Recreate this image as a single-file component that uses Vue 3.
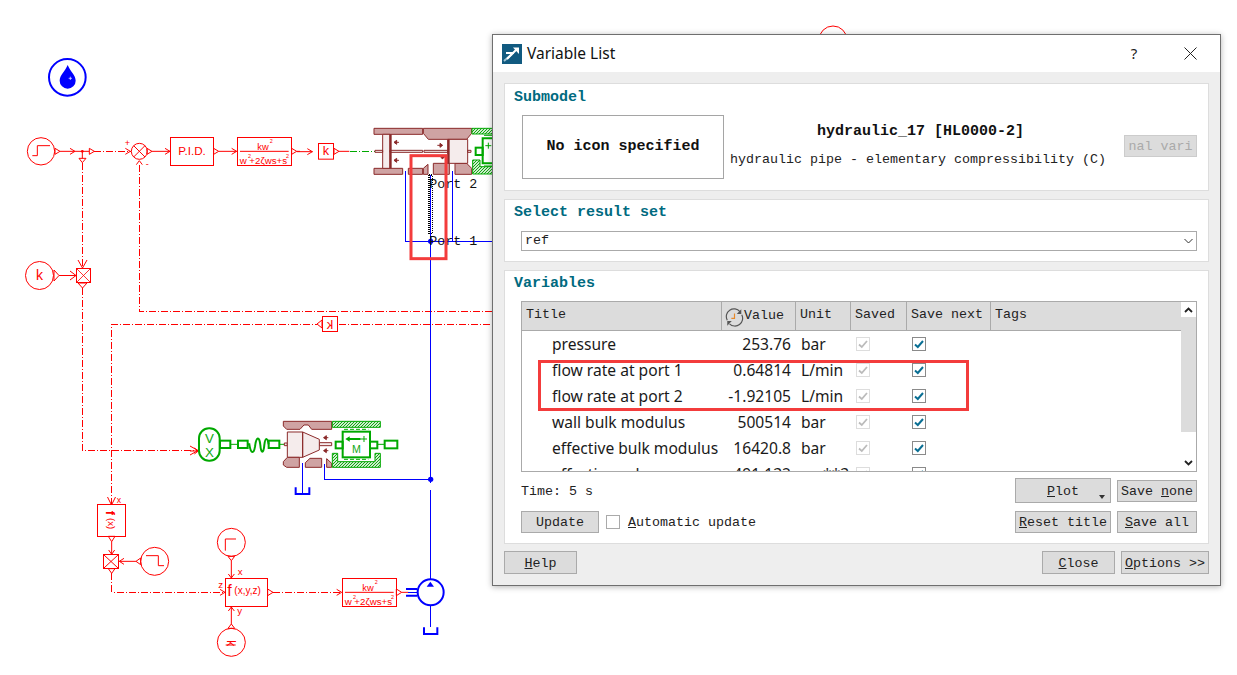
<script setup>
const rows = [
  { title: 'pressure', value: '253.76', unit: 'bar' },
  { title: 'flow rate at port 1', value: '0.64814', unit: 'L/min' },
  { title: 'flow rate at port 2', value: '-1.92105', unit: 'L/min' },
  { title: 'wall bulk modulus', value: '500514', unit: 'bar' },
  { title: 'effective bulk modulus', value: '16420.8', unit: 'bar' },
  { title: 'effective volume', value: '491.132', unit: 'cm**3' }
]
const arrowsLeft = ['M297 127h-14M290 121l-8 6l8 6z', 'M297 181h-14M290 175l-8 6l8 6z']
</script>

<template>
  <div class="desk">
    <svg class="canvas" width="1237" height="675" viewBox="0 0 1237 675">
      <defs>
        <pattern id="hatch" patternUnits="userSpaceOnUse" width="9" height="9">
          <rect width="9" height="9" fill="#cfeccf" />
          <path d="M-2 11L11 -2M-2 2L2 -2M7 11L11 7" stroke="#12a812" stroke-width="3" />
        </pattern>
        <g id="tf">
          <rect class="r3" x="0.5" y="0.5" width="162" height="84" />
          <text class="rt" x="60" y="39" font-size="28">kw</text>
          <text class="rt" x="97" y="18" font-size="16">2</text>
          <path class="r3" d="M8 42H154" />
          <text class="rt" x="7" y="79" font-size="27" textLength="142" lengthAdjust="spacingAndGlyphs">w +2ζws+s</text>
          <text class="rt" x="32" y="62" font-size="16">2</text>
          <text class="rt" x="146" y="62" font-size="16">2</text>
        </g>
      </defs>

      <!-- dash-dot signal routing, in page pixels -->
      <circle class="r1" cx="833" cy="40" r="14" />
      <path class="r1 dash" d="M82.500 163V268M139.500 165V311.500H493M111.500 505V324.500H317M339 324.500H493M82.500 288V450.500H198" />
      <path class="r1" d="M78 260l4.500 8l4.500 -8M190 446l8 4.500l-8 4.500M107.500 497l4 8l4 -8" />

      <!-- k gain into multiplier -->
      <circle class="r1" cx="39.500" cy="275.500" r="14" />
      <text class="rt" x="39.500" y="280" font-size="14" text-anchor="middle">k</text>
      <path class="r1" d="M54 270l5 5.500l-5 5.500zM59 275.500H76M70 271l6 4.500l-6 4.500" />
      <rect class="r1" x="76.500" y="268.500" width="14" height="14" />
      <path class="r1 thin" d="M77 269l13 13M90 269l-13 13" />
      <path class="r1" d="M78 283h9l-4.500 5z" />

      <!-- flipped gain -->
      <rect class="r1" x="322.500" y="316.500" width="15" height="15" />
      <text class="rt" transform="translate(330 329) scale(-1 1)" font-size="13" text-anchor="middle">k</text>
      <path class="r1" d="M322 320l-5 4l5 4z" />

      <!-- top control row: coordinates are 3x crop units -->
      <g transform="translate(0 20) scale(.33333)">
        <circle class="b6" cx="202" cy="172" r="55" />
        <path fill="#00f" d="M203 135C195 155 179 165 179 182A24 24 0 0 0 227 182C227 165 211 155 203 135Z" />
        <path stroke="#fff" stroke-width="2" d="M206 175h10M211 170v10" />
        <circle class="r3" cx="123" cy="394" r="41" />
        <path class="r3" d="M97 407h15V377h38" />
        <path class="r3" d="M165 385l15 9l-15 9zM180 394H268M210 385l15 9l-15 9" />
        <circle class="rd" cx="247" cy="394" r="4" />
        <path class="r3" d="M268 385l15 9l-15 9zM237 415h21l-11 13zM247 394v21" />
        <path class="r3 dash3" d="M283 394H392" />
        <path class="r3" d="M376 385l15 9l-15 9" />
        <circle class="r3" cx="418" cy="394" r="24" />
        <path class="r3" d="M401 377l34 34M435 377l-34 34M409 434l9 -12l9 12" />
        <path class="r3" d="M441 385l15 9l-15 9zM456 394H510M495 385l15 9l-15 9" />
        <text class="rt" x="374" y="378" font-size="27">+</text>
        <text class="rt" x="437" y="441" font-size="27">-</text>
        <rect class="r3" x="511.500" y="352.500" width="129" height="84" />
        <text class="rt" x="576" y="406" font-size="35" text-anchor="middle">P.I.D.</text>
        <path class="r3" d="M641 385l15 9l-15 9zM656 394H710M695 385l15 9l-15 9" />
        <use href="#tf" x="712" y="352" />
        <path class="r3" d="M875 385l15 9l-15 9zM890 394H900" />
      </g>

      <!-- upper hydraulic component -->
      <g transform="translate(300 100) scale(.33333)">
        <path class="r3" d="M-10 155H38M22 146l15 9l-15 9" />
        <rect class="r3" x="55.500" y="130.500" width="45" height="47" />
        <text class="rt" x="78" y="166" font-size="38" text-anchor="middle">k</text>
        <path class="r3" d="M102 145l15 9l-15 9zM117 154H148" />
        <path class="g3 dash3" d="M150 154H226" />
        <path class="br" d="M222 85H368V103H222ZM370 85H515V100L500 118H385L370 100ZM222 205H308V223H222ZM325 205H368V223H325ZM370 205L384 193V223H370ZM400 190H448V223H400ZM465 190H500L515 205V223H465Z" />
        <path class="lt" d="M248 103H270V205H248ZM225 151H248V157H225ZM270 151H368V157H270ZM372 151H443V157H372ZM443 118H503V190H443ZM503 151H513V157H503Z" />
        <path fill="#8b2a2a" d="M268 103H275V205H268ZM443 118H449V190H443Z" />
        <path v-for="a in arrowsLeft" :key="a" class="bra" :d="a" />
        <path class="bra" d="M412 136h14M420 130l8 6l-8 6zM422 172h10M426 167l7 5l-7 5z" />
        <path class="hatch" d="M516 85H578V102H516ZM518 180H540V200H578V222H518Z" />
        <rect class="g6" x="527" y="143" width="21" height="22" />
        <path class="g6" d="M578 115H548V190H578" />
        <path class="g3" d="M556 137h18M565 128v18M552 106h24M552 198h24" />
        <path class="b3" d="M316 213V424H578M457 213V424M392 225V1150" />
        <path class="dots" d="M387 225V400H397V225Z" />
        <circle cx="392" cy="424" r="8" fill="#00f" />
        <text class="mono" x="388" y="265" font-size="40">Port 2</text>
        <text class="mono" x="388" y="436" font-size="40">Port 1</text>
        <rect class="note" x="333" y="167" width="105" height="309" />
      </g>

      <!-- lower valve -->
      <g transform="translate(190 400) scale(.33333)">
        <path class="r3" d="M0 153H25M13 144l12 9l-12 9" />
        <rect class="g6" x="27" y="85" width="62" height="97" rx="30" />
        <text class="gt" x="58" y="130" font-size="40" text-anchor="middle">V</text>
        <text class="gt" x="58" y="170" font-size="40" text-anchor="middle">X</text>
        <rect class="g6" x="90" y="122" width="31" height="22" />
        <path class="g3" d="M121 133H143" />
        <rect class="g6" x="144" y="122" width="29" height="22" />
        <path class="g6" d="M173 133H178C183 165 192 160 195 140C199 108 208 108 211 135C213 162 221 162 223 135C226 110 232 112 236 133" />
        <rect class="g6" x="236" y="122" width="32" height="22" />
        <path class="g3" d="M268 133H284" />
        <path class="lt" d="M283 129H292V137H283ZM388 128H425V137H388Z" />
        <path class="lt" d="M292 96H338V172H292ZM338 96L388 118V150L338 172Z" />
        <path class="br" d="M280 64H425V88H365L355 75H342L330 88H290L280 78ZM280 185L292 172H328V202H290L280 195ZM346 188L360 175H395V202H346ZM410 176L425 190V202H410Z" />
        <path class="bra" d="M415 113h-14M409 107l-8 6l8 6zM415 152h-14M409 146l-8 6l8 6z" />
        <path class="hatch" d="M427 64H571V82H427ZM427 160H443V185H555V160H571V202H427Z" />
        <rect class="g6" x="458" y="95" width="82" height="77" fill="#fff" />
        <rect class="g6" x="437" y="125" width="21" height="20" />
        <rect class="g6" x="540" y="125" width="22" height="20" />
        <path class="g3" d="M562 133H583" />
        <rect class="g6" x="584" y="122" width="38" height="23" />
        <path class="g6" d="M512 117H476" />
        <path class="gf" d="M466 117l13 -8v16z" />
        <path class="g3" d="M522 108v18M513 117h18" />
        <path class="g3" d="M462 88h73M462 178h73" stroke-dasharray="12 6" />
        <text class="gt" x="499" y="160" font-size="32" text-anchor="middle">M</text>
        <path class="b3" d="M337 190V278M403 192V238H722" />
        <path class="b6" d="M317 262V282H358V262" />
        <circle cx="722" cy="238" r="8" fill="#00f" />
      </g>

      <!-- lower control block -->
      <g transform="translate(80 490) scale(.33333)">
        <rect class="r3" x="52.500" y="43.500" width="84" height="96" />
        <text class="rt" transform="translate(78 62) rotate(90)" font-size="38" font-weight="700">f</text>
        <text class="rt" transform="translate(84 84) rotate(90)" font-size="29">(x)</text>
        <text class="rt" x="110" y="38" font-size="26">x</text>
        <path class="r3" d="M85 139h20l-10 16zM95 155V193M86 180l9 13l9 -13" />
        <rect class="r3" x="70.500" y="193.500" width="45" height="42" />
        <path class="r3" d="M72 195l42 39M114 195l-42 39" />
        <path class="r3" d="M85 236h20l-10 14z" />
        <path class="r3 dash3" d="M95 250V307H436" />
        <path class="r3" d="M420 298l15 9l-15 9" />
        <circle class="r3" cx="224" cy="214" r="42" />
        <path class="r3" d="M198 197h37v30h17M182 204v20l-14 -10zM168 214H118M132 205l-14 9l14 9" />
        <circle class="r3" cx="454" cy="157" r="42" />
        <path class="r3" d="M436 182V147h32M444 199h20l-10 13zM454 212V264M445 252l9 12l9 -12" />
        <rect class="r3" x="436.500" y="265.500" width="126" height="84" />
        <text class="rt" x="442" y="319" font-size="48">f</text>
        <text class="rt" x="463" y="313" font-size="30">(x,y,z)</text>
        <text class="rt" x="415" y="293" font-size="29">z</text>
        <text class="rt" x="473" y="256" font-size="29">x</text>
        <text class="rt" x="472" y="372" font-size="29">y</text>
        <path class="r3" d="M563 297v20l16 -10z" />
        <path class="r3 dash3" d="M579 307H786" />
        <path class="r3" d="M770 298l15 9l-15 9" />
        <use href="#tf" x="787" y="265" />
        <path class="r3" d="M949 297v20l16 -10zM965 307H985" />
        <path class="r3" d="M444 415h20l-10 -13zM454 402V351M445 363l9 -12l9 12" />
        <circle class="r3" cx="454" cy="457" r="42" />
        <text class="rt" transform="translate(441 451) rotate(90)" font-size="36">k</text>
        <path class="r3" d="M437 465h30" />
        <path class="b6" d="M978 297H1012M978 317H1012" />
        <path class="b3" d="M985 307H1012M1052 267V0M1052 347V412" />
        <circle class="b6c" cx="1052" cy="307" r="39" />
        <path fill="#00f" d="M1040 290h22l-11 -15z" />
        <path class="b6" d="M1032 412V432H1072V412" />
      </g>
    </svg>

    <section class="dialog">
      <header class="titlebar">
        <svg class="appicon" width="20" height="20" viewBox="0 0 20 20">
          <rect width="20" height="20" fill="#115a80" />
          <path d="M2 17L10 10" stroke="#9fc0d0" stroke-width="2" />
          <path d="M4 9H12M5 15L15 5" stroke="#fff" stroke-width="2" fill="none" />
          <path d="M11 3.500H17V10Z" fill="#fff" />
        </svg>
        <h1 class="wintitle">Variable List</h1>
        <span class="help">?</span>
        <svg class="closex" width="13" height="13" viewBox="0 0 13 13"><path d="M.5 .5L12.500 12.500M12.500 .5L.5 12.500" stroke="#222" /></svg>
      </header>

      <div class="body">
        <div class="panel sub">
          <h2>Submodel</h2>
          <div class="subrow">
            <div class="noicon">No icon specified</div>
            <div class="info">
              <strong>hydraulic_17 [HL0000-2]</strong>
              <span>hydraulic pipe - elementary compressibility (C)</span>
            </div>
            <button class="btn off">nal vari</button>
          </div>
        </div>

        <div class="panel res">
          <h2>Select result set</h2>
          <div class="combo">
            <span>ref</span>
            <svg width="9" height="6" viewBox="0 0 9 6"><path d="M.5 1L4.500 5L8.500 1" stroke="#333" fill="none" /></svg>
          </div>
        </div>

        <div class="panel vars">
          <h2>Variables</h2>
          <div class="table">
            <div class="main">
              <div class="head">
                <span>Title</span>
                <span class="valhead">
                  <svg width="19" height="19" viewBox="0 0 21 21">
                    <path d="M2.500 13.500A8.500 8.500 0 0 1 16.500 4M18.500 7.500A8.500 8.500 0 0 1 5 17.500" stroke="#555" stroke-width="1.300" fill="none" />
                    <path d="M18 1.500v5h-5zM2.500 19.500v-5h5z" fill="#555" />
                    <path d="M10.500 6V11.500H7" stroke="#e8892a" stroke-width="1.300" fill="none" />
                  </svg>
                  Value
                </span>
                <span>Unit</span>
                <span>Saved</span>
                <span>Save next</span>
                <span>Tags</span>
              </div>
              <div v-for="r in rows" :key="r.title" class="row">
                <span class="t">{{ r.title }}</span>
                <span class="v">{{ r.value }}</span>
                <span class="u">{{ r.unit }}</span>
                <span class="c">
                  <i class="box dis"><svg width="12" height="12" viewBox="0 0 12 12"><path d="M2 6.500L4.800 9L10 3" stroke="#bbb" stroke-width="1.800" fill="none" /></svg></i>
                </span>
                <span class="c">
                  <i class="box"><svg width="12" height="12" viewBox="0 0 12 12"><path d="M2 6.500L4.800 9L10 3" stroke="#0a6f94" stroke-width="2" fill="none" /></svg></i>
                </span>
                <span></span>
              </div>
            </div>
            <div class="scroll">
              <div class="sbtn">
                <svg width="9" height="6" viewBox="0 0 9 6"><path d="M1 5L4.500 1.500L8 5" stroke="#222" stroke-width="1.800" fill="none" /></svg>
              </div>
              <div class="thumb"></div>
              <div class="sbtn end">
                <svg width="9" height="6" viewBox="0 0 9 6"><path d="M1 1L4.500 4.500L8 1" stroke="#222" stroke-width="1.800" fill="none" /></svg>
              </div>
            </div>
            <div class="mark"></div>
          </div>

          <div class="controls">
            <div class="left">
              <div class="time">Time: 5 s</div>
              <div class="update">
                <button class="btn upd">Update</button>
                <i class="box auto"></i>
                <span><u>A</u>utomatic update</span>
              </div>
            </div>
            <div class="actions">
              <button class="btn plot"><u>P</u>lot<b class="caret"></b></button>
              <button class="btn"><span>Save <u>n</u>one</span></button>
              <button class="btn"><u>R</u>eset title</button>
              <button class="btn"><u>S</u>ave all</button>
            </div>
          </div>
        </div>

        <footer class="foot">
          <button class="btn fhelp"><u>H</u>elp</button>
          <button class="btn fclose"><u>C</u>lose</button>
          <button class="btn fopt"><u>O</u>ptions &gt;&gt;</button>
        </footer>
      </div>
    </section>
  </div>
</template>

<style>
html, body { margin: 0; background: #fff; }
</style>

<style scoped>
.desk {
  position: relative;
  width: 1237px;
  height: 675px;
  overflow: hidden;
  background: #fff;
}
.canvas { display: block; }

.r1 { fill: none; stroke: #f00; stroke-width: 1; }
.r1.thin { stroke-width: .8; }
.r3 { fill: #fff; fill-opacity: 0; stroke: #f00; stroke-width: 3; }
.rd { fill: #f00; }
.dash { stroke-dasharray: 7 2 1 2; shape-rendering: crispEdges; }
.dash3 { stroke-dasharray: 21 6 3 6; fill: none; shape-rendering: crispEdges; }
.rt { fill: #f00; stroke: none; font-family: "Liberation Sans", Arial, sans-serif; }
.gt { fill: #12a812; stroke: none; font-family: "Liberation Sans", Arial, sans-serif; }
.gf { fill: #00a800; }
.g3 { fill: none; stroke: #00a800; stroke-width: 3; }
.g6 { fill: none; stroke: #00a800; stroke-width: 6; }
.b3 { fill: none; stroke: #00f; stroke-width: 3; shape-rendering: crispEdges; }
.b6 { fill: none; stroke: #00f; stroke-width: 6; }
.b6c { fill: #fff; stroke: #00f; stroke-width: 6; }
.dots { fill: none; stroke: #000; stroke-width: 4; stroke-dasharray: 3 3; shape-rendering: crispEdges; }
.br { fill: #cfa3a3; stroke: #8b2a2a; stroke-width: 3; }
.lt { fill: #f5ecec; stroke: #8b2a2a; stroke-width: 3; }
.bra { fill: #8b2a2a; stroke: #8b2a2a; stroke-width: 3; }
.hatch { fill: url(#hatch); stroke: #00a800; stroke-width: 3; }
.mono { fill: #111; font-family: "Liberation Mono", monospace; }
.note { fill: none; stroke: #f33c3c; stroke-width: 9; }

.dialog {
  position: absolute;
  left: 492px;
  top: 34px;
  width: 729px;
  height: 552px;
  box-sizing: border-box;
  border: 1px solid #6f6f6f;
  background: #eee;
  box-shadow: 0 1px 6px rgba(0, 0, 0, .3);
  display: flex;
  flex-direction: column;
  font: 13.33px/18px "Liberation Mono", monospace;
  color: #222;
}
.titlebar {
  height: 37px;
  flex: none;
  background: #fff;
  display: flex;
  align-items: center;
  padding-left: 9px;
}
.appicon { flex: none; }
.wintitle {
  margin: -2px 0 0 5px;
  flex: 1;
  font: 400 15.500px/20px "Noto Sans", sans-serif;
  color: #111;
}
.help {
  font: 15px/20px "Noto Sans", sans-serif;
  width: 20px;
  text-align: center;
  margin-right: 40px;
  margin-top: -2px;
}
.closex { margin-right: 23px; }

.body {
  flex: 1;
  display: flex;
  flex-direction: column;
  gap: 8px;
  padding: 11px 11px 0;
}
.panel {
  box-sizing: border-box;
  background: #fff;
  border: 1px solid #ddd;
  padding: 4px 0 0 9px;
}
.panel h2 {
  margin: 0 0 9px;
  font: 700 15px/18px "Liberation Mono", monospace;
  color: #006a80;
}
.sub { height: 108px; }
.sub h2 { position: relative; top: 1px; }
.res { height: 63px; }
.vars { height: 274px; margin-bottom: -1px; }

.subrow { display: flex; align-items: center; margin-left: 8px; }
.noicon {
  box-sizing: border-box;
  width: 202px;
  height: 64px;
  border: 1px solid #a5a5a5;
  display: flex;
  align-items: center;
  justify-content: center;
  font: 700 15px/18px "Liberation Mono", monospace;
  color: #111;
}
.info {
  width: 395px;
  height: 64px;
  padding-left: 6px;
  box-sizing: border-box;
  display: flex;
  flex-direction: column;
  white-space: nowrap;
}
.info strong {
  margin-top: 8px;
  text-align: center;
  margin-left: -8px;
  color: #111;
  font: 700 15px/18px "Liberation Mono", monospace;
}
.info span { margin-top: 10px; }

.btn {
  box-sizing: border-box;
  height: 22px;
  padding: 2px 0 0;
  background: #dcdcdc;
  border: 1px solid #aaa;
  border-radius: 0;
  font: 13.33px/18px "Liberation Mono", monospace;
  color: #222;
  white-space: nowrap;
}
.btn.off {
  width: 73px;
  margin-left: 5px;
  margin-top: -2px;
  border-color: #ccc;
  color: #aaa;
}

.combo {
  box-sizing: border-box;
  height: 20px;
  margin: 0 11px 0 7px;
  padding: 0 3px 0 3px;
  border: 1px solid #aaa;
  display: flex;
  align-items: center;
  justify-content: space-between;
}

.table {
  position: relative;
  box-sizing: border-box;
  width: 676px;
  height: 171px;
  margin: -1px 0 0 7px;
  border: 1px solid #aaa;
  display: flex;
}
.main { width: 659px; overflow: hidden; flex: none; }
.head, .row {
  display: grid;
  grid-template-columns: 200px 74px 55px 56px 84px 1fr;
}
.head {
  height: 29px;
  box-sizing: border-box;
  background: #dcdcdc;
  border-bottom: 1px solid #aaa;
}
.head > span {
  box-sizing: border-box;
  border-right: 1px solid #aaa;
  padding-left: 4px;
  line-height: 26px;
}
.head > span:last-child { border-right: 0; }
.head .valhead {
  display: flex;
  align-items: center;
  padding-left: 3px;
  gap: 0;
}
.valhead svg { flex: none; margin-top: 2px; }
.row {
  height: 26px;
  align-items: center;
  font: 15.600px/26px "Noto Sans", sans-serif;
  color: #1a1a1a;
}
.row .t { padding-left: 30px; white-space: nowrap; }
.row .v { text-align: right; padding-right: 5px; }
.row .u { padding-left: 5px; }
.row .c { padding-left: 5px; display: flex; align-items: center; }

.box {
  box-sizing: border-box;
  width: 14px;
  height: 14px;
  border: 1px solid #8a8a8a;
  display: flex;
  align-items: center;
  justify-content: center;
  background: #fff;
}
.box.dis { border-color: #ddd; }
.auto { border-color: #aaa; margin: 0 8px 0 7px; }

.scroll {
  width: 15px;
  flex: none;
  display: flex;
  flex-direction: column;
  background: #fff;
}
.sbtn {
  height: 15px;
  flex: none;
  display: flex;
  align-items: center;
  justify-content: center;
}
.sbtn.end { margin-top: auto; height: 16px; }
.thumb { height: 115px; background: #dcdcdc; }

.mark {
  position: absolute;
  left: 16px;
  top: 58px;
  width: 431px;
  height: 51px;
  box-sizing: border-box;
  border: 3px solid #f33c3c;
  pointer-events: none;
}

.controls {
  display: flex;
  justify-content: space-between;
  width: 676px;
  margin: 6px 0 0 7px;
}
.left { display: flex; flex-direction: column; }
.time { height: 33px; line-height: 28px; }
.update { display: flex; align-items: center; }
.update > span { padding-top: 2px; }
.btn.upd { width: 78px; }
.actions {
  display: grid;
  grid-template-columns: 96px 80px;
  grid-template-rows: 25px 22px;
  gap: 8px 6px;
  align-items: center;
}
.plot { position: relative; height: 25px; }
.caret {
  position: absolute;
  right: 5px;
  bottom: 3px;
  border-style: solid;
  border-width: 4px 3px 0;
  border-color: #333 transparent transparent;
}

.foot { display: flex; gap: 6px; }
.foot .btn { height: 23px; }
.fhelp { width: 73px; margin-right: auto; }
.fclose { width: 73px; }
.fopt { width: 88px; }
</style>
